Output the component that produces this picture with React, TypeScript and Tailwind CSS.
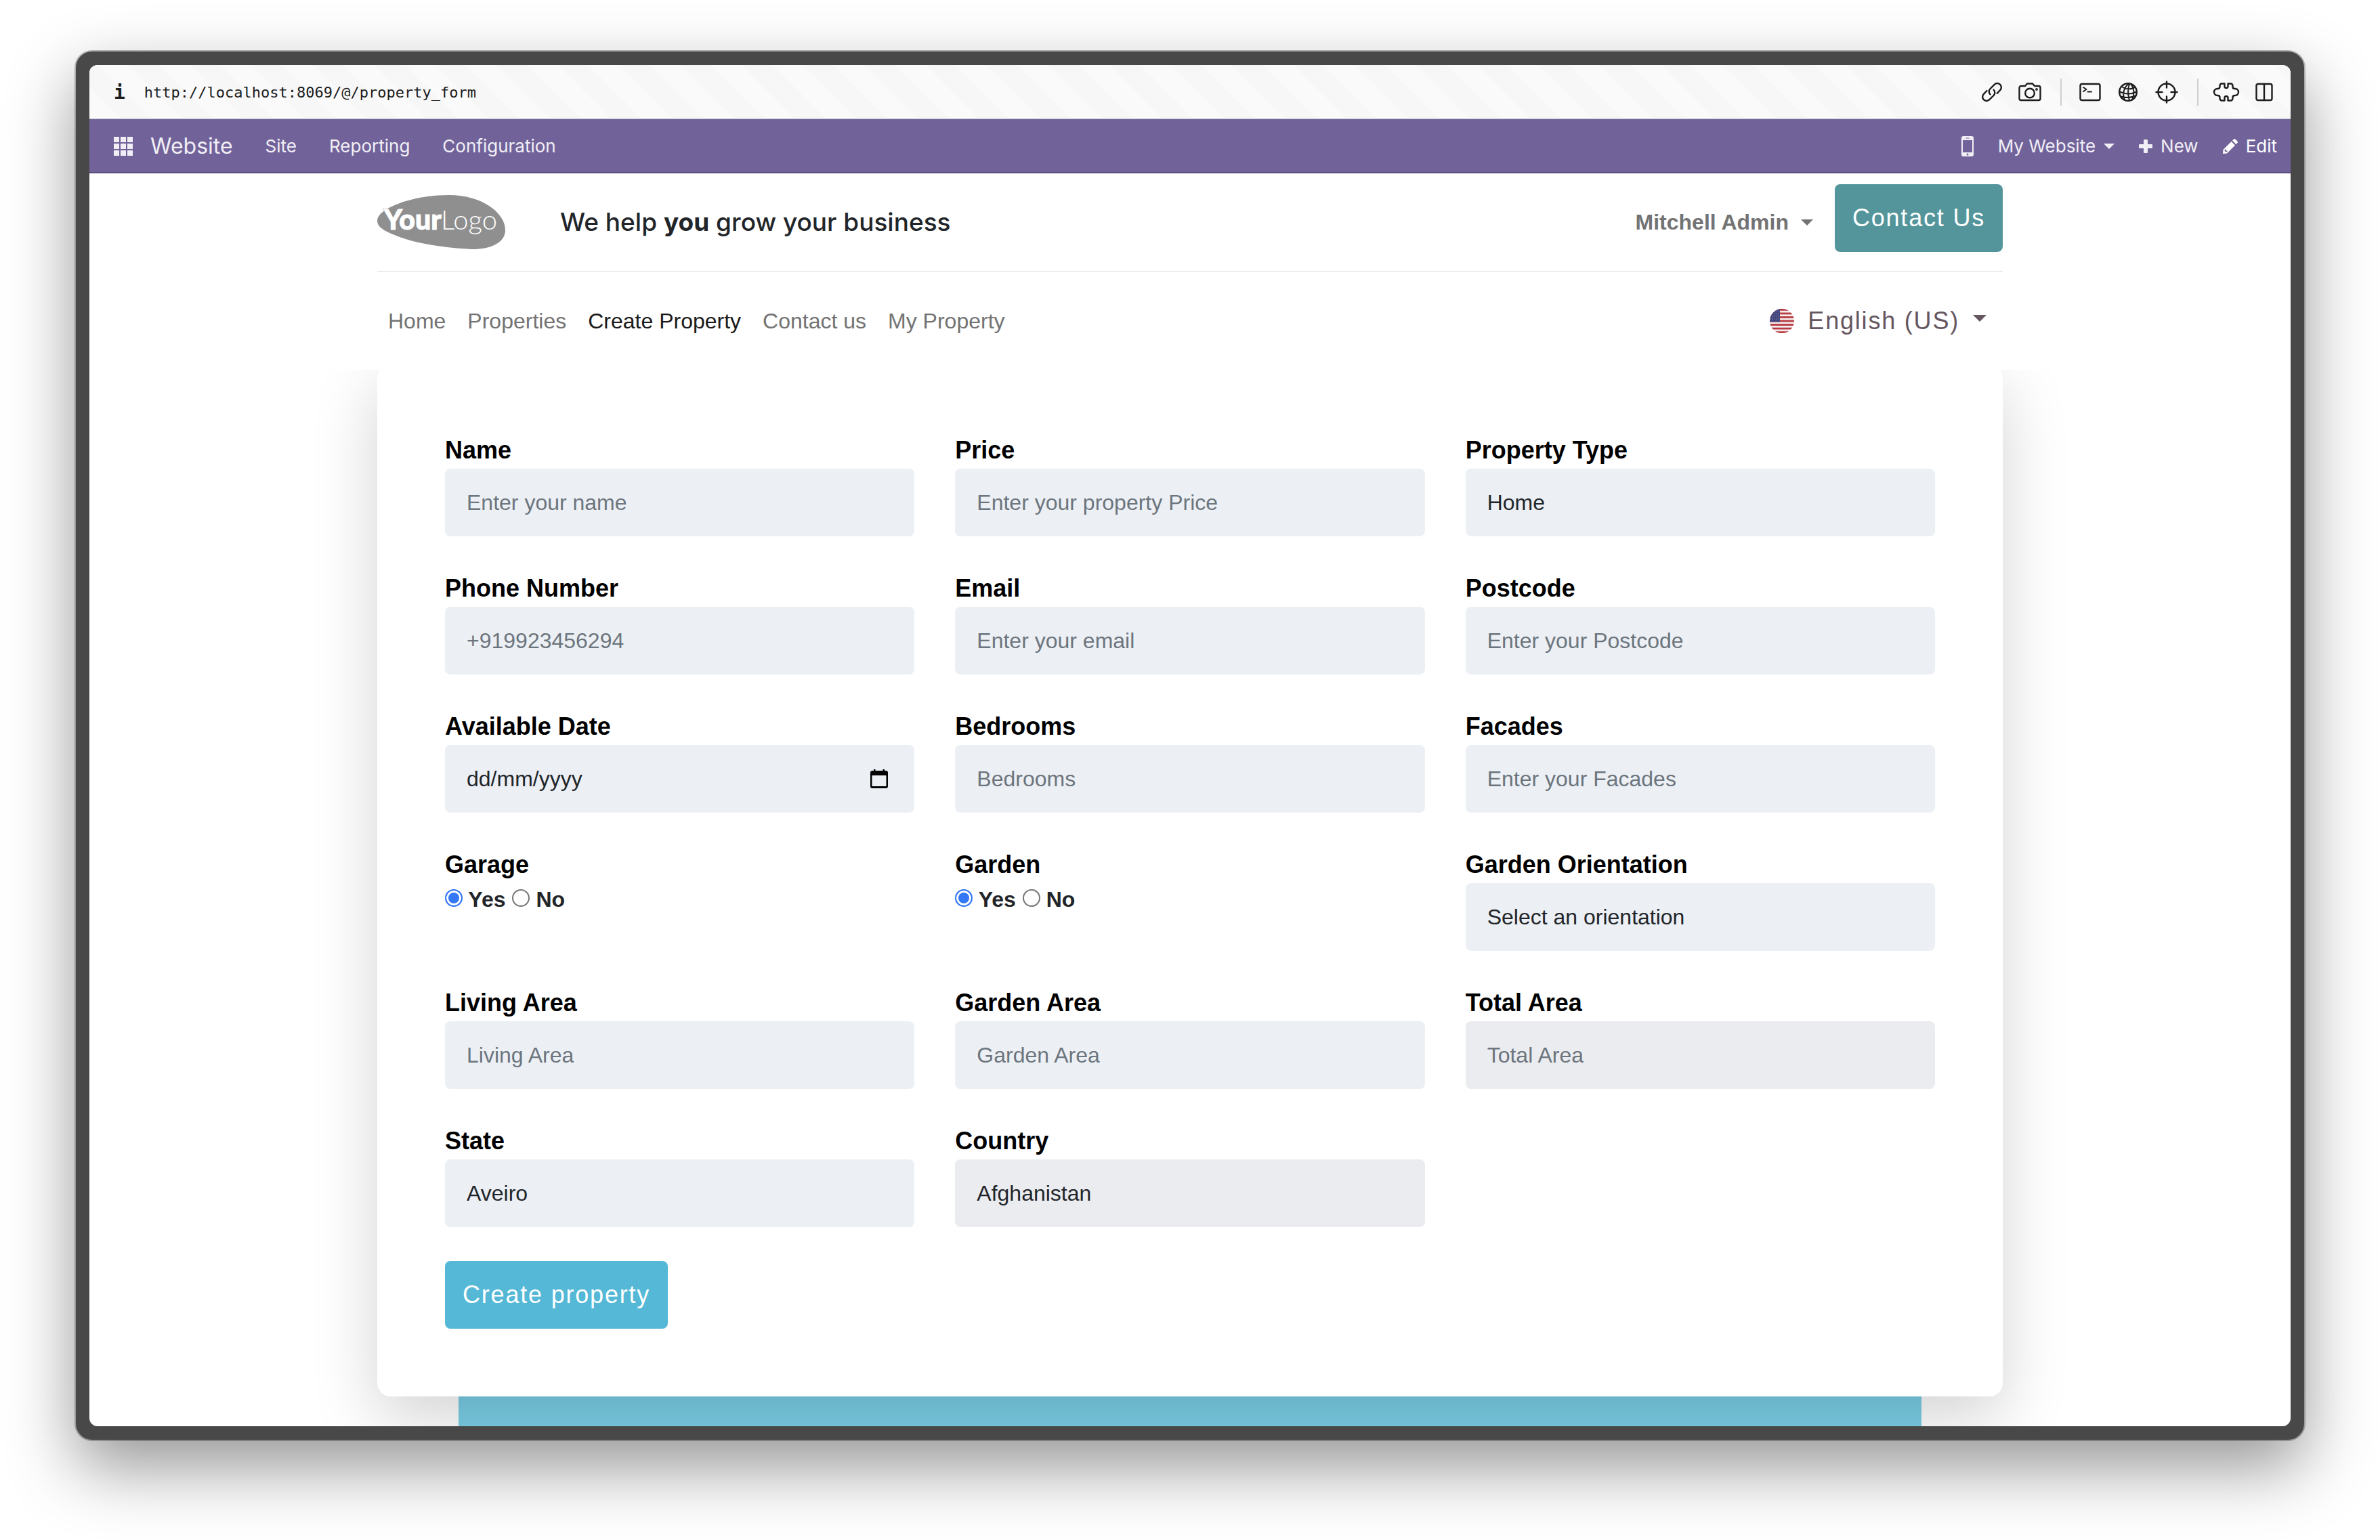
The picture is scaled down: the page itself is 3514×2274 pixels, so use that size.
import React from "react";

type FieldProps = { id: string; label: string; placeholder?: string; value?: string; type?: string; readOnly?: boolean };

const control =
  "block h-[100px] w-full appearance-none rounded-lg border-0 px-8 text-[32px] leading-[48px] text-[#212529] outline-none placeholder:text-[#6c757d] placeholder:opacity-100";

function Label({ htmlFor, children }: { htmlFor: string; children: React.ReactNode }) {
  return (
    <label htmlFor={htmlFor} className="block text-[36px] leading-[54px] font-bold text-black">
      {children}
    </label>
  );
}

function Field({ id, label, placeholder, value, type = "text", readOnly }: FieldProps) {
  return (
    <div>
      <Label htmlFor={id}>{label}</Label>
      <input
        id={id}
        type={type}
        placeholder={placeholder}
        defaultValue={value}
        readOnly={readOnly}
        className={`${control} ${readOnly ? "bg-[#ebecf0]" : "bg-[#ecf0f5]"}`}
      />
    </div>
  );
}

function SelectField({ id, label, options, muted }: { id: string; label: string; options: string[]; muted?: boolean }) {
  return (
    <div>
      <Label htmlFor={id}>{label}</Label>
      <select id={id} className={`${control} ${muted ? "bg-[#ebecf0]" : "bg-[#ecf0f5]"}`}>
        {options.map((o) => (
          <option key={o}>{o}</option>
        ))}
      </select>
    </div>
  );
}

function DateField() {
  return (
    <div>
      <Label htmlFor="date">Available Date</Label>
      <div className="flex h-[100px] items-center rounded-lg bg-[#ecf0f5] pr-8">
        <input
          id="date"
          type="text"
          placeholder="dd/mm/yyyy"
          className="h-full min-w-0 flex-1 bg-transparent pl-8 text-[32px] leading-[48px] text-[#212529] outline-none placeholder:text-[#212529] placeholder:opacity-100"
        />
        <button type="button" aria-label="Open calendar" className="p-1">
          <svg width="32" height="32" viewBox="0 0 32 32" fill="black" className="block">
            <path d="M6 4h2V2h2.500v2h11V2H24v2h2a3 3 0 0 1 3 3v20a3 3 0 0 1-3 3H6a3 3 0 0 1-3-3V7a3 3 0 0 1 3-3Zm-.5 7v16h21V11Z" fillRule="evenodd" />
          </svg>
        </button>
      </div>
    </div>
  );
}

function RadioField({ name, label }: { name: string; label: string }) {
  const radio =
    "inline-block h-[26px] w-[26px] appearance-none rounded-full border-2 border-[#767676] bg-white align-baseline checked:border-[#3478f6] checked:bg-[#3478f6] checked:shadow-[inset_0_0_0_3px_white]";
  return (
    <fieldset>
      <legend className="block text-[36px] leading-[54px] font-bold text-black">{label}</legend>
      <div className="flex gap-2.5 text-[32px] leading-[48px] font-bold text-[#212529]">
        <label>
          <input type="radio" name={name} defaultChecked className={radio} /> Yes
        </label>
        <label>
          <input type="radio" name={name} className={radio} /> No
        </label>
      </div>
    </fieldset>
  );
}

function Caret({ className }: { className: string }) {
  return (
    <svg viewBox="0 0 20 10" className={className} fill="currentColor" aria-hidden="true">
      <path d="M0 0h20L10 10z" />
    </svg>
  );
}

function Logo() {
  return (
    <svg width="190" height="80" viewBox="0 0 190 80" role="img" aria-label="Your Logo">
      <path
        d="M0 38C0 26 20 16 42 9 62 3 84 0 106 0c48 0 83 26 83 52 0 18-21 28-49 28-40-2-80-8-107-18C12 54 0 48 0 38Z"
        fill="#8f8f8f"
      />
      <path d="M8 20h8l-4 6Z" fill="#8f8f8f" />
      <text x="10" y="51" fill="white" stroke="white" strokeWidth="1" fontFamily="Lato, sans-serif" fontSize="41" fontWeight="900">
        Your
      </text>
      <text x="94" y="51" fill="white" fontFamily="Lato, sans-serif" fontSize="40" fontWeight="300">
        Logo
      </text>
    </svg>
  );
}

function Flag() {
  return (
    <svg width="36" height="36" viewBox="0 0 36 36" aria-hidden="true">
      <clipPath id="round">
        <circle cx="18" cy="18" r="18" />
      </clipPath>
      <g clipPath="url(#round)">
        <rect width="36" height="36" fill="#f4eeee" />
        {[0, 1, 2, 3, 4, 5, 6].map((i) => (
          <rect key={i} y={i * 5.54} width="36" height="2.77" fill="#b83a42" />
        ))}
        <rect width="15" height="19.4" fill="#46467f" />
        {[3, 7, 11, 15].map((y) => (
          <path key={y} d={`M1 ${y}h13`} stroke="#a9a9cc" strokeWidth="1" strokeDasharray="1 2" />
        ))}
      </g>
    </svg>
  );
}

const line = { fill: "none", stroke: "#1c1c1c", strokeWidth: 2.4, strokeLinecap: "round", strokeLinejoin: "round" } as const;

function ToolButton({ label, children, w }: { label: string; children: React.ReactNode; w: number }) {
  return (
    <button type="button" aria-label={label}>
      <svg width={w} height="36" viewBox={`0 0 ${w} 36`} className="block overflow-visible" {...line}>
        {children}
      </svg>
    </button>
  );
}

function BrowserBar() {
  return (
    <div className="flex h-20 items-center justify-between border-b-2 border-[#dcdcdc] bg-[repeating-linear-gradient(45deg,#fafafa_0_32px,#f7f7f7_32px_64px)] pt-0.5 pr-[26px] pl-9">
      <div className="flex items-center gap-7 pt-0.5 text-[22px] leading-[30px] text-[#1c1c1c] [font-family:'DejaVu_Sans_Mono',monospace]">
        <b className="text-[28px]">i</b>
        <span>http://localhost:8069/@/property_form</span>
      </div>
      <div className="flex items-center gap-7">
        <div className="flex items-center gap-6">
          <ToolButton label="Copy link" w={30}>
            <path d="M12.500 21.500a6 6 0 0 1 0-8.500l6.200-6.200a5.900 5.900 0 0 1 8.400 8.400L22.500 20M17.500 14.500a6 6 0 0 1 0 8.500l-6.200 6.200a5.900 5.900 0 0 1-8.400-8.400L7.500 16" />
          </ToolButton>
          <ToolButton label="Screenshot" w={34}>
            <path d="M4 9h6l3-3.500h8L24 9h6a2.500 2.500 0 0 1 2.500 2.500v16A2.500 2.500 0 0 1 30 30H4a2.500 2.500 0 0 1-2.500-2.500v-16A2.500 2.500 0 0 1 4 9Z" />
            <circle cx="17" cy="19.500" r="6.800" />
            <circle cx="27" cy="14" r=".7" />
          </ToolButton>
        </div>
        <div className="flex h-10 items-center gap-[26px] border-l-2 border-[#cfcfcf] pl-[26px]">
          <ToolButton label="Terminal" w={32}>
            <rect x="1.500" y="6" width="29" height="24" rx="2.500" />
            <path d="m6 11 4.500 3L6 17M12.500 17.500h5.500" strokeWidth="2" />
          </ToolButton>
          <ToolButton label="Globe" w={28}>
            <circle cx="14" cy="18" r="12.800" />
            <path
              d="M15 5.500C8 11 5 21 9 29.500M16 5.500C14 12 13.500 22 16 30.500M18 6c5 6 6 15 2 23.500M4.500 10c6 4 13 4.500 19.500 1M1.500 17.500c8 3.500 17 4 25 0M3 24.500c7 2 15 2 21.500-1"
              strokeWidth="2"
            />
          </ToolButton>
          <ToolButton label="Inspect" w={34}>
            <circle cx="17" cy="18" r="12.500" />
            <path d="M17 2.500v9M17 24.500v9M1.500 18h9M23.500 18h9" />
          </ToolButton>
        </div>
        <div className="flex h-10 items-center gap-6 border-l-2 border-[#cfcfcf] pl-[22px]">
          <ToolButton label="Extensions" w={38}>
            <path d="M12.500 5.500h4v4a2.500 2.500 0 0 0 5 0v-4h4a3 3 0 0 1 3 3V10c0 2 1 3 3 3h.5a5 5 0 0 1 0 10h-.5c-2 0-3 1-3 3v1.500a3 3 0 0 1-3 3h-4v-4a2.500 2.500 0 0 0-5 0v4h-4a3 3 0 0 1-3-3V26c0-2-1-3-3-3H6a5 5 0 0 1 0-10h.5c2 0 3-1 3-3V8.500a3 3 0 0 1 3-3Z" />
          </ToolButton>
          <ToolButton label="Split view" w={26}>
            <rect x="1.500" y="6" width="23" height="24" rx="2.500" />
            <path d="M13 6v24" />
          </ToolButton>
        </div>
      </div>
    </div>
  );
}

function AdminBar() {
  return (
    <nav className="flex h-20 items-center justify-between border-b-2 border-[#5a4f7f] bg-[#71639a] pt-0.5 pr-5 pl-9 text-[26px] leading-[40px] text-[#f1eff5] [font-family:Inter,sans-serif]">
      <div className="flex items-center gap-12">
        <div className="flex items-center gap-[26px]">
          <button type="button" aria-label="Apps" className="grid grid-cols-3 gap-0.5">
            {Array.from({ length: 9 }, (_, i) => (
              <span key={i} className="size-2 bg-[#f1eff5]" />
            ))}
          </button>
          <a href="#website" className="text-[32px]">Website</a>
        </div>
        <a href="#site">Site</a>
        <a href="#reporting">Reporting</a>
        <a href="#configuration">Configuration</a>
      </div>
      <div className="flex items-center gap-9">
        <button type="button" aria-label="Mobile preview">
          <svg width="18" height="30" viewBox="0 0 18 30" fill="currentColor" className="block">
            <path fillRule="evenodd" d="M3 0h12a3 3 0 0 1 3 3v24a3 3 0 0 1-3 3H3a3 3 0 0 1-3-3V3a3 3 0 0 1 3-3ZM2 6v18h14V6ZM6.500 2.500v1h5v-1ZM9 25.500a1.500 1.500 0 1 0 0 3 1.500 1.500 0 0 0 0-3Z" />
          </svg>
        </button>
        <button type="button" className="flex items-center gap-3">
          My Website <Caret className="h-2 w-4" />
        </button>
        <button type="button" className="flex items-center gap-3">
          <svg width="20" height="20" viewBox="0 0 20 20" fill="currentColor">
            <path d="M8 0h4a1 1 0 0 1 1 1v6h6a1 1 0 0 1 1 1v4a1 1 0 0 1-1 1h-6v6a1 1 0 0 1-1 1H8a1 1 0 0 1-1-1v-6H1a1 1 0 0 1-1-1V8a1 1 0 0 1 1-1h6V1a1 1 0 0 1 1-1Z" />
          </svg>
          New
        </button>
        <button type="button" className="flex items-center gap-3 text-white">
          <svg width="22" height="22" viewBox="0 0 22 22" fill="currentColor">
            <path fillRule="evenodd" d="M12.500 4 18 9.500 6 21.500 0 22l.5-6ZM14 2.500 15.800.7a2 2 0 0 1 2.800 0L21.300 3.400a2 2 0 0 1 0 2.800L19.500 8ZM3 15.500l-.6 2.200 1.900 1.900 2.200-.6v-1.500H4.500v-2Z" />
          </svg>
          Edit
        </button>
      </div>
    </nav>
  );
}

const links = ["Home", "Properties", "Create Property", "Contact us", "My Property"];

function SiteHeader() {
  return (
    <header className="relative z-20 bg-white">
      <div className="mx-auto w-full max-w-[2400px]">
        <div className="flex h-[146px] items-start justify-between border-b-2 border-[#ebecf2] pt-4">
          <div className="flex items-center gap-20 pt-4">
            <a href="#home"><Logo /></a>
            <h4 className="text-[37px] leading-[48px] font-medium text-[#212529] [font-family:Inter,sans-serif]">
              We help <b>you</b> grow your business
            </h4>
          </div>
          <div className="flex items-center gap-8">
            <button type="button" className="flex items-center gap-[18px] pt-3 text-[32px] leading-[48px] font-bold text-[#737373]">
              Mitchell Admin <Caret className="h-[9px] w-[18px]" />
            </button>
            <a href="#contact" className="flex h-[100px] items-center rounded-lg bg-[#53959b] px-[26px] text-[36px] leading-[54px] tracking-wider text-white">
              Contact Us
            </a>
          </div>
        </div>
        <div className="flex h-36 items-center justify-between pr-6 pl-4">
          <nav className="flex gap-8 text-[32px] leading-[48px] text-[#737373]">
            {links.map((l) => (
              <a key={l} href="#nav" className={l === "Create Property" ? "text-[#1a1a1a]" : undefined}>
                {l}
              </a>
            ))}
          </nav>
          <button type="button" className="flex items-center gap-5 text-[36px] leading-[54px] tracking-wider text-[#65565f]">
            <Flag /> English (US) <Caret className="mb-2 h-2.5 w-5" />
          </button>
        </div>
      </div>
    </header>
  );
}

function PropertyForm() {
  return (
    <form className="relative z-10 mx-auto -mt-2 w-full max-w-[2400px] rounded-[20px] bg-white p-[100px] shadow-[0_32px_96px_rgba(0,0,0,0.175)]">
      <div className="grid grid-cols-3 gap-x-[60px] gap-y-[50px]">
        <Field id="name" label="Name" placeholder="Enter your name" />
        <Field id="price" label="Price" placeholder="Enter your property Price" />
        <SelectField id="type" label="Property Type" options={["Home", "Apartment"]} />
        <Field id="phone" label="Phone Number" placeholder="+919923456294" />
        <Field id="email" label="Email" placeholder="Enter your email" />
        <Field id="postcode" label="Postcode" placeholder="Enter your Postcode" />
        <DateField />
        <Field id="bedrooms" label="Bedrooms" placeholder="Bedrooms" />
        <Field id="facades" label="Facades" placeholder="Enter your Facades" />
        <RadioField name="garage" label="Garage" />
        <RadioField name="garden" label="Garden" />
        <SelectField id="orientation" label="Garden Orientation" options={["Select an orientation", "North", "South"]} />
        <Field id="living" label="Living Area" placeholder="Living Area" />
        <Field id="garden-area" label="Garden Area" placeholder="Garden Area" />
        <Field id="total" label="Total Area" placeholder="Total Area" readOnly />
        <SelectField id="state" label="State" options={["Aveiro"]} />
        <SelectField id="country" label="Country" options={["Afghanistan"]} muted />
      </div>
      <button type="submit" className="mt-[50px] block h-[100px] rounded-lg bg-[#54b8d6] px-[26px] text-[36px] leading-[54px] tracking-wider text-white">
        Create property
      </button>
    </form>
  );
}

export default function App() {
  return (
    <div className="flex min-h-screen flex-col bg-white px-28 pt-[76px] pb-[148px] [font-family:'Liberation_Sans',Arial,sans-serif]">
      <div className="flex flex-1 flex-col rounded-3xl bg-[#484848] p-5 shadow-[0_0_0_2px_rgba(0,0,0,0.25),0_40px_100px_rgba(0,0,0,0.42)]">
        <div className="flex flex-1 flex-col overflow-hidden rounded-xl bg-white">
          <BrowserBar />
          <AdminBar />
          <SiteHeader />
          <main className="flex flex-1 flex-col">
            <PropertyForm />
            <div className="mx-auto min-h-11 w-full max-w-[2160px] flex-1 bg-[#7bcfe6]" />
          </main>
        </div>
      </div>
    </div>
  );
}
